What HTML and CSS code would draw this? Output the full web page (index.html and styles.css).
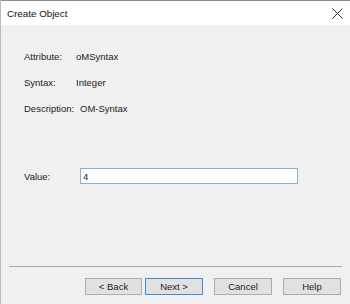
FILE: index.html
```html
<!DOCTYPE html>
<html lang="en">
<head>
    <meta charset="UTF-8">
    <title>Create Object</title>
    <link rel="stylesheet" href="styles.css">
</head>
<body>
    <div class="dialog">
        <div class="titlebar">
            <span class="title">Create Object</span>
            <svg class="close" width="11" height="11" viewBox="0 0 11 11">
                <path d="M0.5 0.5 L10.5 10.5 M10.5 0.5 L0.5 10.5" stroke="#333" stroke-width="1" fill="none"/>
            </svg>
        </div>
        <div class="content">
            <div class="props">
                <span class="label">Attribute:</span>
                <span class="value">oMSyntax</span>
                <span class="label">Syntax:</span>
                <span class="value">Integer</span>
                <span class="label">Description:</span>
                <span class="value shifted">OM-Syntax</span>
            </div>
            <div class="value-row">
                <label for="val" class="label">Value:</label>
                <input id="val" type="text" value="4">
            </div>
        </div>
        <div class="footer">
            <hr class="separator">
            <div class="buttons">
                <button>&lt; Back</button>
                <button class="default">Next &gt;</button>
                <button class="spaced">Cancel</button>
                <button class="spaced">Help</button>
            </div>
        </div>
    </div>
</body>
</html>
```

FILE: styles.css
```css
body {
    margin: 0;
    background-color: #f0f0f0;
    font-family: "Liberation Sans", Arial, sans-serif;
    font-size: 9.5px;
    color: #222;
}
.dialog {
    height: 304px;
    border-left: 1px solid #b9b9b9;
    box-sizing: border-box;
}
.titlebar {
    height: 24px;
    background-color: #fff;
    border-top: 1px solid #8e8e8e;
    display: flex;
    align-items: center;
    justify-content: space-between;
    padding: 0 7px 0 6px;
}
.title {
    font-size: 9.8px;
    color: #111;
}
.close {
    display: block;
}
.content {
    padding: 26px 0 0 23px;
}
.props {
    display: grid;
    grid-template-columns: 52px auto;
    row-gap: 14px;
    line-height: 12px;
}
.shifted {
    padding-left: 4px;
}
.value-row {
    display: flex;
    align-items: center;
    margin-top: 53px;
}
.value-row .label {
    width: 56px;
}
input {
    width: 218px;
    height: 16px;
    box-sizing: border-box;
    border: 1px solid #7fb4dd;
    background-color: #fff;
    font: inherit;
    padding: 0 2px;
    color: #222;
    outline: none;
}
.footer {
    margin-top: 82px;
    padding: 0 8px;
}
.separator {
    margin: 0;
    border: none;
    border-top: 1px solid #a9a9a9;
}
.buttons {
    display: flex;
    justify-content: flex-end;
    margin-top: 11px;
    padding-right: 1px;
}
button {
    width: 57px;
    height: 17px;
    margin-left: 3px;
    background-color: #e1e1e1;
    border: 1px solid #adadad;
    font: inherit;
    color: #222;
    padding: 0;
}
button.default {
    border-color: #3c8fd4;
    width: 58px;
}
button.spaced {
    margin-left: 11px;
    width: 58px;
}
```
